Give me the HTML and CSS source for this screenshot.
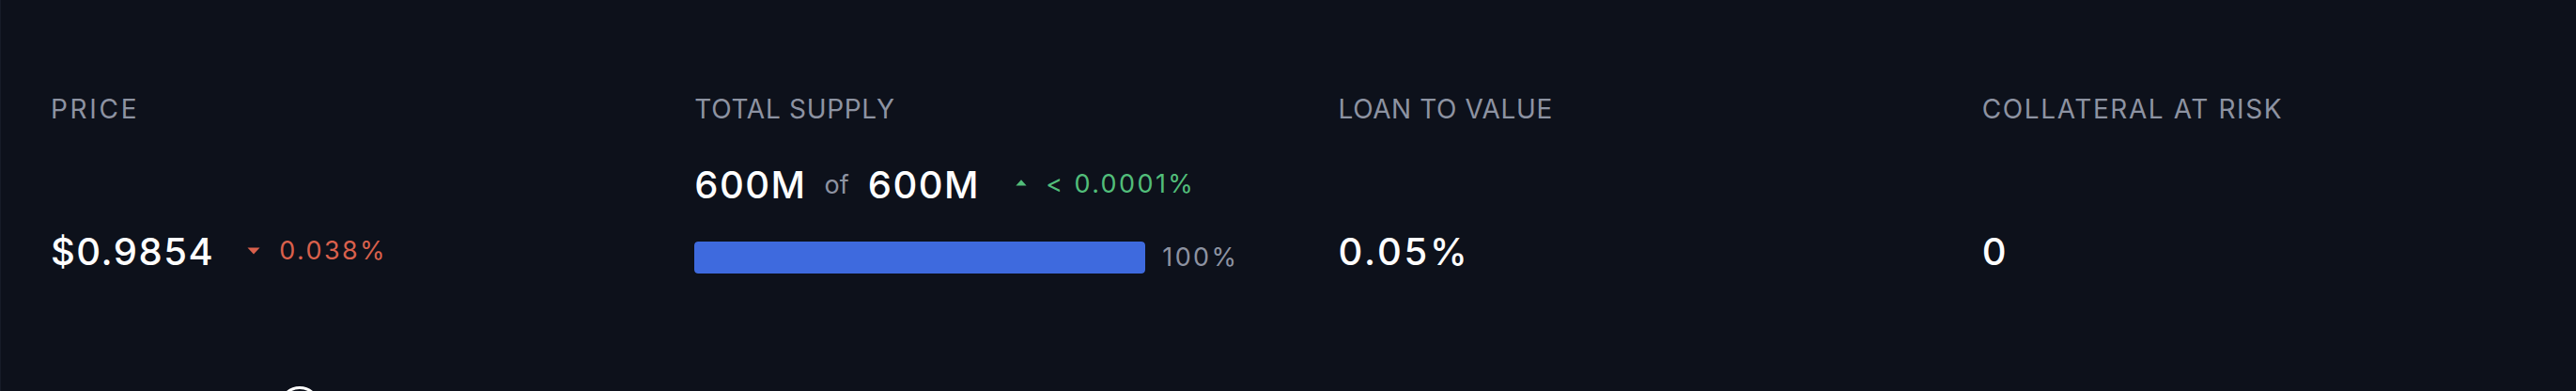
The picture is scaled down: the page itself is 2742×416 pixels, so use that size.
FILE: index.html
```html
<!DOCTYPE html>
<html lang="en">
<head>
<meta charset="utf-8">
<title>Stats</title>
<link rel="stylesheet" href="styles.css">
</head>
<body>
<main class="page">
  <section class="stats">
    <div class="stat">
      <div class="stat-label stat-label--price">PRICE</div>
      <div class="stat-single">
        <span class="value">$0.9854</span>
        <span class="change change--down">
          <svg class="tri tri--down" width="14" height="8" viewBox="0 0 14 8"><path d="M0.5 0.5H13.5L7 7.6Z"/></svg>
          <span class="change-text">0.038%</span>
        </span>
      </div>
    </div>
    <div class="stat">
      <div class="stat-label stat-label--supply">TOTAL SUPPLY</div>
      <div class="supply-row">
        <span class="value">600M</span>
        <span class="of">of</span>
        <span class="value">600M</span>
        <span class="change change--up">
          <svg class="tri tri--up" width="12" height="7" viewBox="0 0 12 7"><path d="M6 0.3L11.6 6.6H0.4Z"/></svg>
          <span class="change-text">&lt; 0.0001%</span>
        </span>
      </div>
      <div class="bar-row">
        <div class="bar"><div class="bar-fill" style="width:100%"></div></div>
        <span class="bar-pct">100%</span>
      </div>
    </div>
    <div class="stat">
      <div class="stat-label stat-label--ltv">LOAN TO VALUE</div>
      <div class="stat-single">
        <span class="value value--wide">0.05%</span>
      </div>
    </div>
    <div class="stat">
      <div class="stat-label stat-label--risk">COLLATERAL AT RISK</div>
      <div class="stat-single">
        <span class="value">0</span>
      </div>
    </div>
  </section>
  <section class="below">
    <svg class="ring" width="44" height="44" viewBox="0 0 44 44"><circle cx="22" cy="22" r="20.5" fill="none" stroke="#ffffff" stroke-width="3"/></svg>
  </section>
</main>
</body>
</html>
```

FILE: styles.css
```css
html, body {
  margin: 0;
  padding: 0;
}

body {
  width: 2742px;
  height: 416px;
  overflow: hidden;
  background: #0d111b;
  font-family: Inter, "Liberation Sans", sans-serif;
  color: #ffffff;
}

.page {
  height: 416px;
  box-sizing: border-box;
  border-left: 1px solid #161c28;
}

.stats {
  display: grid;
  grid-template-columns: repeat(4, 1fr);
  padding-top: 100px;
}

.stat {
  padding-left: 53px;
  display: flex;
  flex-direction: column;
  align-items: flex-start;
}

.stat-label {
  font-size: 28px;
  line-height: 32px;
  height: 32px;
  letter-spacing: 1px;
  color: #8d93a2;
  white-space: nowrap;
}

.stat-label--price { letter-spacing: 2.7px; }
.stat-label--supply { letter-spacing: 0.7px; }
.stat-label--ltv { letter-spacing: 0.6px; }
.stat-label--risk { letter-spacing: 1.6px; }

.value {
  font-size: 40px;
  line-height: 48px;
  font-weight: 500;
  letter-spacing: 1.5px;
  color: #ffffff;
  white-space: nowrap;
}

.value--wide {
  letter-spacing: 2.8px;
}

.stat-single {
  margin-top: 112px;
  height: 48px;
  display: flex;
  align-items: center;
}

.change {
  display: flex;
  align-items: center;
  font-size: 27px;
  line-height: 40px;
  letter-spacing: 2.4px;
  white-space: nowrap;
  margin-bottom: 3px;
}

.change--down {
  color: #d9604c;
  margin-left: 35px;
}

.change--up {
  color: #52be7a;
  margin-left: 38px;
}

.tri {
  display: block;
  flex: none;
}

.tri--down { fill: #d9604c; margin-right: 20px; }
.tri--up { fill: #52be7a; margin-right: 20px; margin-bottom: 2px; }

.supply-row {
  margin-top: 41px;
  height: 48px;
  display: flex;
  align-items: center;
}

.of {
  font-size: 27px;
  line-height: 40px;
  color: #8d93a2;
  margin: 0 20px 0 19px;
}

.bar-row {
  margin-top: 36px;
  height: 34px;
  display: flex;
  align-items: center;
}

.bar {
  width: 480px;
  height: 34px;
  border-radius: 4px;
  overflow: hidden;
  background: #1c2333;
}

.bar-fill {
  height: 100%;
  background: #3e6ade;
  border-radius: 4px;
}

.bar-pct {
  margin-left: 18px;
  font-size: 27px;
  line-height: 34px;
  letter-spacing: 2.4px;
  color: #8d93a2;
}

.below {
  margin-top: 119px;
  padding-left: 296px;
  display: flex;
}

.ring {
  display: block;
}
```
